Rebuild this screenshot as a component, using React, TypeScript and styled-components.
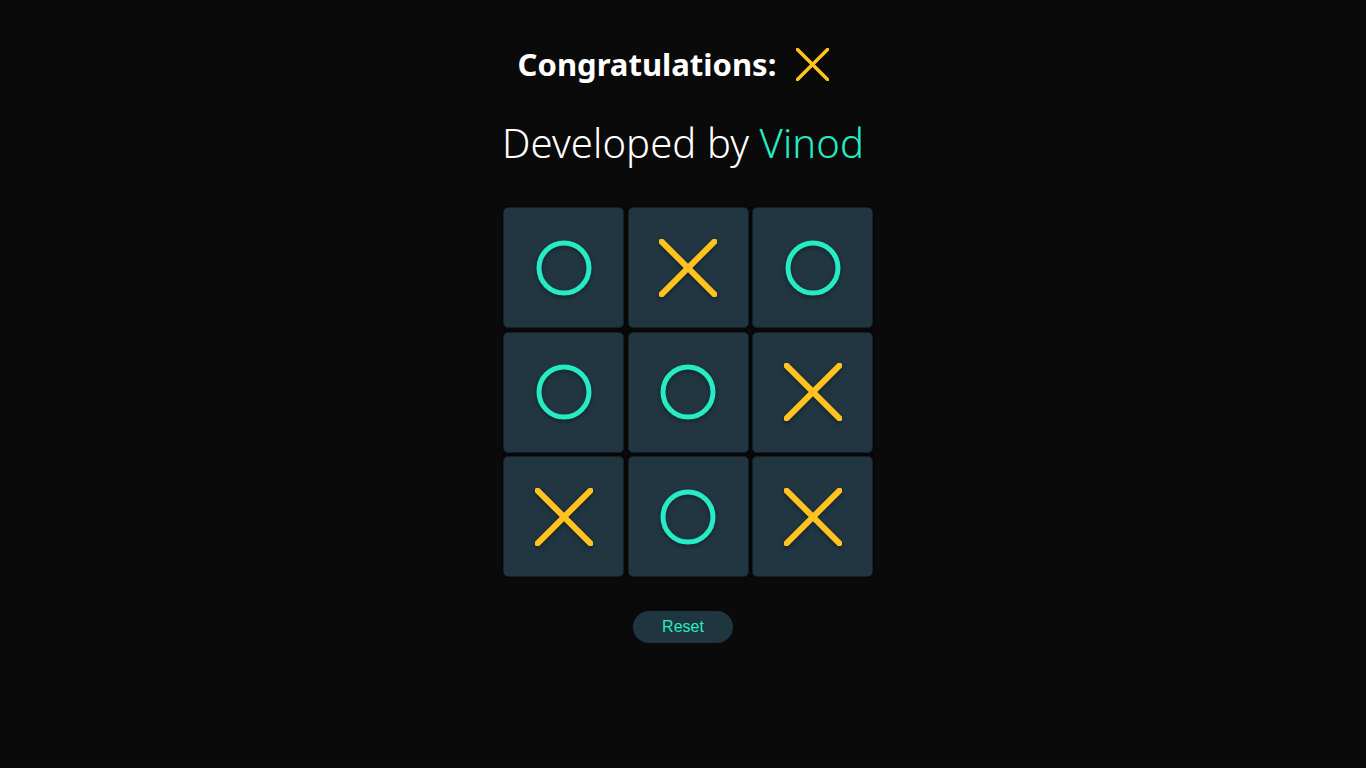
import React from "react";
import styled, { createGlobalStyle } from "styled-components";

const Global = createGlobalStyle`
  html, body { margin: 0; padding: 0; background: #0a0a0a; }
  body { font-family: "Noto Sans", "Open Sans", sans-serif; color: #fff; }
`;

const Page = styled.main`
  min-height: 768px;
  display: flex;
  flex-direction: column;
  align-items: center;
  background: #0a0a0a;
`;

const Title = styled.h1`
  margin: 46px 19px 0 0;
  display: flex;
  align-items: center;
  gap: 20px;
  font-size: 31px;
  font-weight: 700;
  line-height: 36px;
  height: 36px;
  color: #fff;
`;

const Credit = styled.h2`
  margin: 36px 0 0;
  font-size: 40px;
  font-weight: 300;
  line-height: 50px;
  color: #fff;
  letter-spacing: 0.1px;
`;

const Accent = styled.span`
  color: #26ecc6;
`;

const Board = styled.div`
  margin-top: 39px;
  margin-left: 10px;
  display: grid;
  grid-template-columns: repeat(3, 121px);
  grid-auto-rows: 121px;
  gap: 3.5px;
`;

const Cell = styled.div`
  box-sizing: border-box;
  background: #213641;
  border: 1px solid #132229;
  border-radius: 5px;
  box-shadow: 0 0 3px rgba(0, 0, 0, 0.7);
  display: flex;
  align-items: center;
  justify-content: center;
`;

const ResetButton = styled.button`
  margin-top: 34px;
  width: 100px;
  height: 32px;
  border: none;
  border-radius: 16px;
  background: #1f3540;
  color: #26ecc6;
  font-family: "Liberation Sans", Arial, sans-serif;
  font-size: 16px;
  cursor: pointer;
`;

const XMark: React.FC<{ size: number; stroke: number }> = ({ size, stroke }) => (
  <svg width={size} height={size} viewBox="0 0 56 56" style={{ filter: "drop-shadow(0 2px 2px rgba(0,0,0,0.35))" }}>
    <g stroke="#ffc21f" strokeWidth={stroke} strokeLinecap="round">
      <line x1="2.5" y1="2.5" x2="53.5" y2="53.5" />
      <line x1="53.5" y1="2.5" x2="2.5" y2="53.5" />
    </g>
  </svg>
);

const OMark: React.FC = () => (
  <svg width={58} height={58} viewBox="0 0 58 58" style={{ filter: "drop-shadow(0 2px 2px rgba(0,0,0,0.35))" }}>
    <circle cx="29" cy="29" r="25" fill="none" stroke="#26ecc6" strokeWidth="5" />
  </svg>
);

const board = ["O", "X", "O", "O", "O", "X", "X", "O", "X"];

export default function App() {
  return (
    <>
      <Global />
      <Page>
        <Title>
          Congratulations:
          <XMark size={33} stroke={3.5 * 56 / 33} />
        </Title>
        <Credit>
          Developed by <Accent>Vinod</Accent>
        </Credit>
        <Board>
          {board.map((v, i) => (
            <Cell key={i}>{v === "X" ? <XMark size={58} stroke={5.8} /> : <OMark />}</Cell>
          ))}
        </Board>
        <ResetButton>Reset</ResetButton>
      </Page>
    </>
  );
}
